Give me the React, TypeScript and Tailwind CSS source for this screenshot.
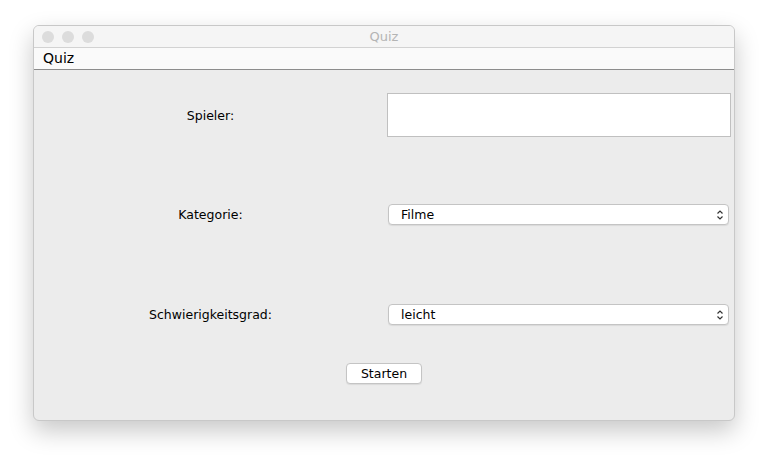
import React from 'react'

function Chevrons() {
  return (
    <svg width="8" height="12" viewBox="0 0 8 12" className="shrink-0">
      <path d="M1.5 4.5 L4 2 L6.5 4.5" fill="none" stroke="#333" strokeWidth="1.2" />
      <path d="M1.5 7.5 L4 10 L6.5 7.5" fill="none" stroke="#333" strokeWidth="1.2" />
    </svg>
  )
}

function Select({ value }: { value: string }) {
  return (
    <div className="ml-[1px] flex h-[21px] w-[341px] items-center justify-between rounded-[4px] border border-[#c4c4c4] bg-white pl-[12px] pr-[4px] shadow-[0_1px_1px_rgba(0,0,0,0.08)]">
      <span className="pt-[2px] text-[12.5px] text-black">{value}</span>
      <Chevrons />
    </div>
  )
}

export default function App() {
  const font = { fontFamily: '"DejaVu Sans", "Liberation Sans", sans-serif' }
  return (
    <div className="h-[462px] w-[768px] bg-white pl-[33px] pt-[25px]" style={font}>
      <div className="flex h-[396px] w-[702px] flex-col overflow-hidden rounded-[6px] border border-[#c8c8c8] bg-[#ececec] shadow-[0_10px_25px_rgba(0,0,0,0.22)]">
        {/* Title bar */}
        <div className="relative flex h-[22px] items-center border-b border-[#d2d2d2] bg-[#f5f5f5] pl-[8px]">
          <div className="flex gap-[8px]">
            <div className="h-[12px] w-[12px] rounded-full bg-[#dcdcdc]" />
            <div className="h-[12px] w-[12px] rounded-full bg-[#dcdcdc]" />
            <div className="h-[12px] w-[12px] rounded-full bg-[#dcdcdc]" />
          </div>
          <div className="absolute inset-0 flex items-center justify-center text-[13px] text-[#b4b4b4]">Quiz</div>
        </div>
        {/* Menu bar */}
        <div className="flex h-[22px] items-center border-b border-[#8c8c8c] bg-[#fafafa] pl-[9px] text-[14px] text-black">
          Quiz
        </div>
        {/* Content */}
        <div className="flex flex-col pt-[23px]">
          <div className="flex h-[44px] items-center">
            <div className="w-[353px] pt-[2px] text-center text-[12.5px] text-black">Spieler:</div>
            <div className="h-[44px] w-[344px] border border-[#c0c0c0] bg-white" />
          </div>
          <div className="mt-[67px] flex h-[21px] items-center">
            <div className="w-[353px] pt-[2px] text-center text-[12.5px] text-black">Kategorie:</div>
            <Select value="Filme" />
          </div>
          <div className="mt-[79px] flex h-[21px] items-center">
            <div className="w-[353px] pt-[2px] text-center text-[12.5px] text-black">Schwierigkeitsgrad:</div>
            <Select value="leicht" />
          </div>
          <div className="mt-[38px] flex justify-center">
            <div className="flex h-[21px] w-[76px] items-center justify-center rounded-[4px] border border-[#c4c4c4] bg-white pt-[2px] text-[12.5px] text-black shadow-[0_1px_1px_rgba(0,0,0,0.08)]">
              Starten
            </div>
          </div>
        </div>
      </div>
    </div>
  )
}
